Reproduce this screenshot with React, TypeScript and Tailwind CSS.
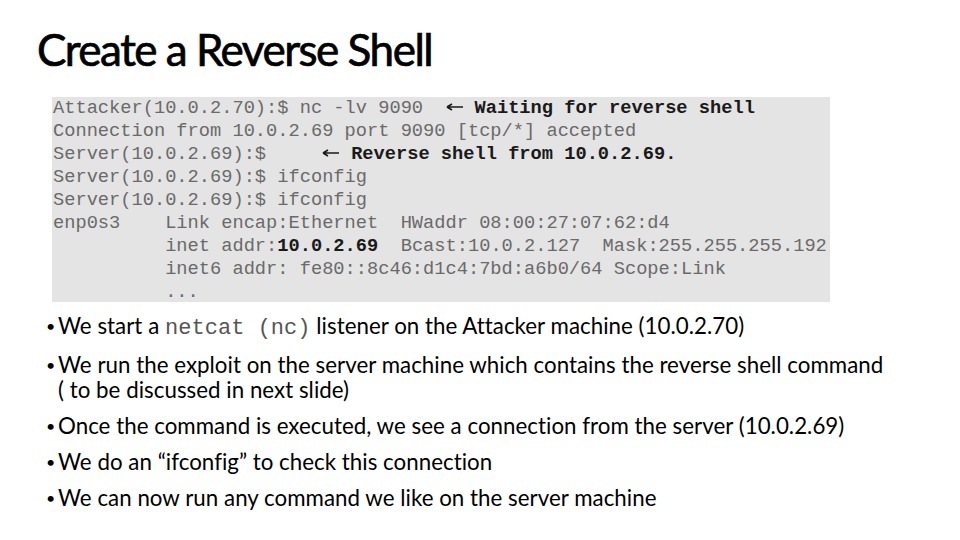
const mono = { fontFamily: '"Liberation Mono", "DejaVu Sans Mono", monospace' };

const Arrow = () => (
  <span className="inline-block w-[29px] align-middle">
    <svg width="17" height="8" viewBox="0 0 17 8" className="mb-[3px]">
      <path d="M1 4H17M1 4L6 1M1 4L6 7" stroke="#1a1a1a" strokeWidth="1.6" fill="none" />
    </svg>
  </span>
);

const B = ({ children }: { children: React.ReactNode }) => (
  <span className="font-bold text-[#1a1a1a]">{children}</span>
);

const Terminal = () => (
  <div className="ml-[52px] mt-[26px] h-[205px] w-[778px] bg-[#e4e4e4] pl-[1px]">
    <div
      className="-mt-[3px] whitespace-pre text-[18.7px] leading-[23px] text-[#6a6a6a]"
      style={mono}
    >
      <div>
        {"Attacker(10.0.2.70):$ nc -lv 9090  "}
        <Arrow />
        <B>Waiting for reverse shell</B>
      </div>
      <div>Connection from 10.0.2.69 port 9090 [tcp/*] accepted</div>
      <div>
        {"Server(10.0.2.69):$     "}
        <Arrow />
        <B>Reverse shell from 10.0.2.69.</B>
      </div>
      <div>Server(10.0.2.69):$ ifconfig</div>
      <div>Server(10.0.2.69):$ ifconfig</div>
      <div>{"enp0s3    Link encap:Ethernet  HWaddr 08:00:27:07:62:d4"}</div>
      <div>
        {"          inet addr:"}
        <B>10.0.2.69</B>
        {"  Bcast:10.0.2.127  Mask:255.255.255.192"}
      </div>
      <div>{"          inet6 addr: fe80::8c46:d1c4:7bd:a6b0/64 Scope:Link"}</div>
      <div>{"          ..."}</div>
    </div>
  </div>
);

const bullets: React.ReactNode[] = [
  <>
    We start a{" "}
    <span className="text-[22px] text-[#555]" style={mono}>
      netcat (nc)
    </span>{" "}
    listener on the Attacker machine (10.0.2.70)
  </>,
  <>
    We run the exploit on the server machine which contains the reverse shell command
    <br />( to be discussed in next slide)
  </>,
  <>Once the command is executed, we see a connection from the server (10.0.2.69)</>,
  <>We do an “ifconfig” to check this connection</>,
  <>We can now run any command we like on the server machine</>,
];

export default function App() {
  return (
    <div
      className="h-[540px] w-[960px] overflow-hidden bg-white text-black"
      style={{ fontFamily: 'Lato, "Open Sans", sans-serif' }}
    >
      <h1 className="pl-[37px] pt-[24px] text-[44px] leading-[50px] tracking-[-1.5px] [-webkit-text-stroke:0.7px_#000]">
        Create a Reverse Shell
      </h1>
      <Terminal />
      <ul className="mt-[11px] flex flex-col gap-[11px] pl-[46px] text-[22.3px] leading-[25px] tracking-[0.03px]">
        {bullets.map((b, i) => (
          <li key={i} className="flex">
            <span className="w-[12px] shrink-0 text-[16px]">•</span>
            <span>{b}</span>
          </li>
        ))}
      </ul>
    </div>
  );
}
